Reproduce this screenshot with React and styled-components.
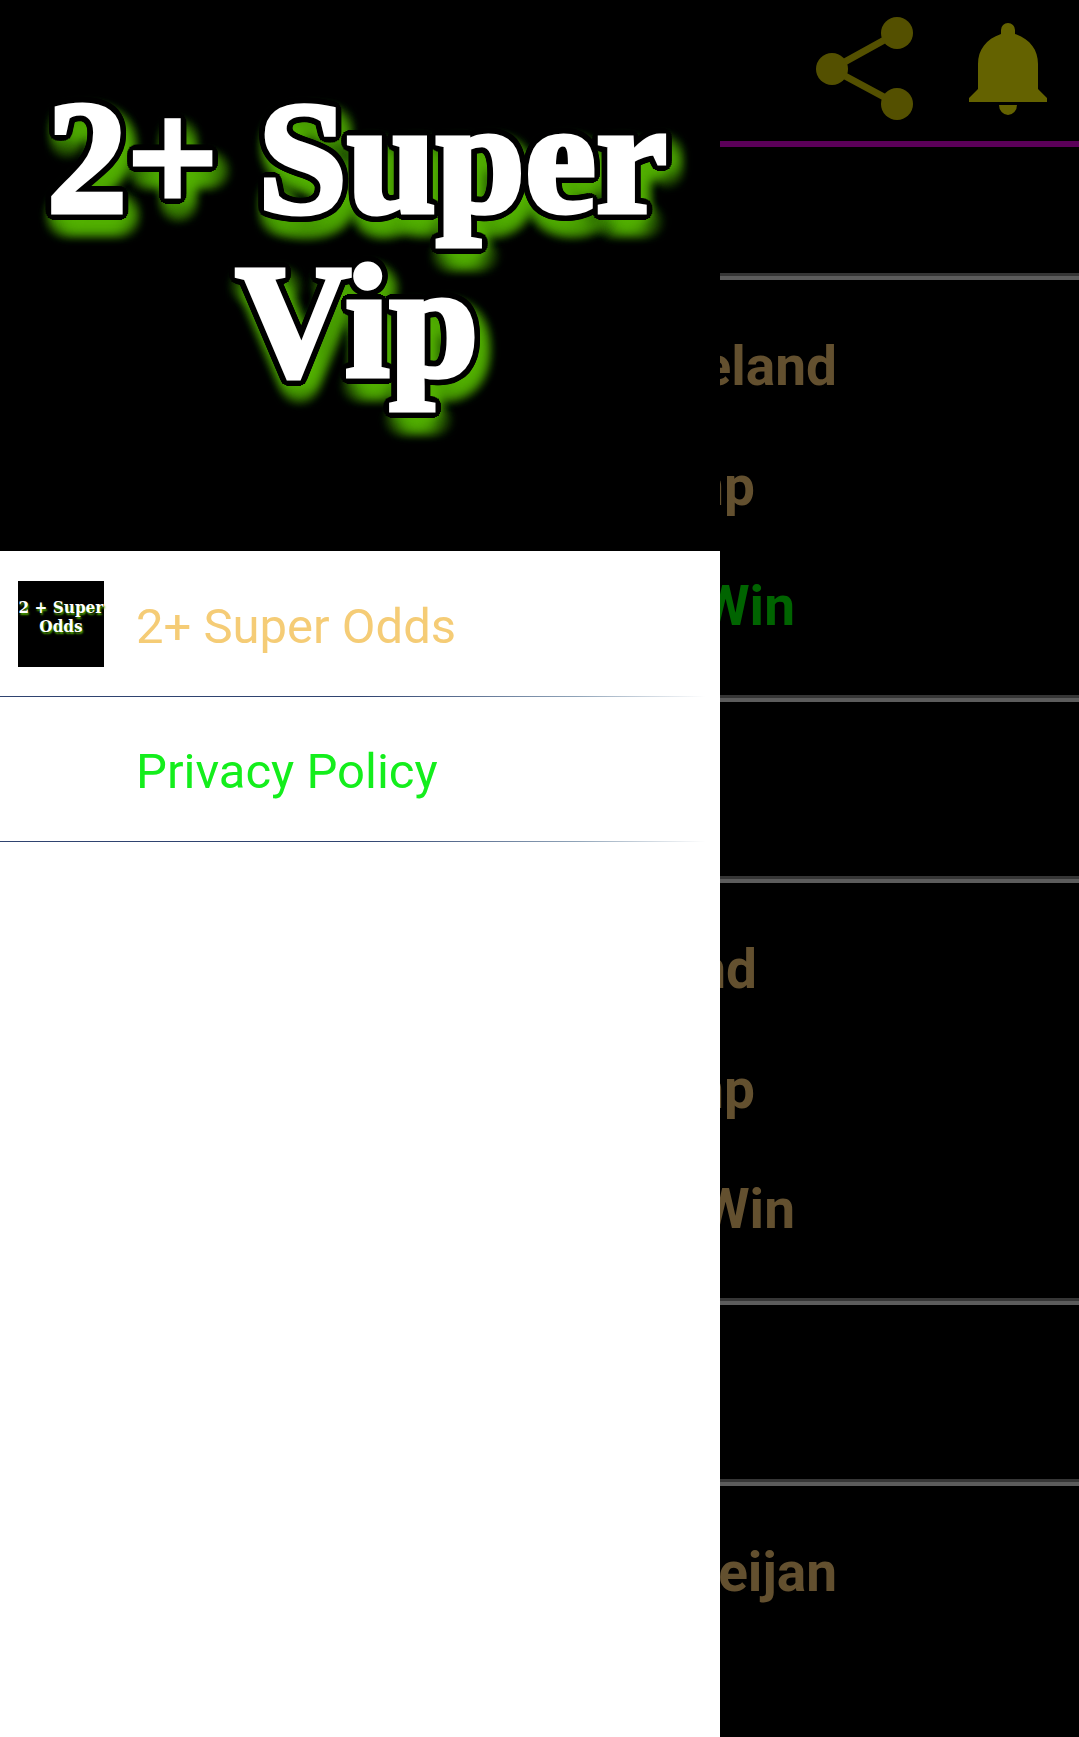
import React from "react";
import styled, { createGlobalStyle } from "styled-components";

const GlobalStyle = createGlobalStyle`
  *, *::before, *::after { box-sizing: border-box; }
  body {
    margin: 0;
    background: #000;
    font-family: Roboto, "Liberation Sans", sans-serif;
  }
`;

// Shadows set round a circle, so that they spread the lettering by `radius`.
const ring = (count, radius, dx, dy, blur, color) =>
  Array.from({ length: count }, (_, i) => {
    const angle = (i / count) * Math.PI * 2;
    const x = Math.round(dx + radius * Math.cos(angle));
    const y = Math.round(dy + radius * Math.sin(angle));
    return `${x}px ${y}px ${blur}px ${color}`;
  }).join(", ");

const outlineAndGlow = [
  ring(32, 8, 0, 0, 0, "#000"),
  ring(16, 11, 6, 12, 12, "rgba(84, 180, 0, 0.4)"),
].join(", ");

const Screen = styled.div`
  position: relative;
  height: 100vh;
  overflow: hidden;
  background: #000;
`;

const TopBar = styled.header`
  display: flex;
  justify-content: flex-end;
  gap: 50px;
  height: 147px;
  padding: 14px 26px 0 0;
  border-bottom: 6px solid #5b0059;
`;

const IconButton = styled.button`
  display: block;
  height: 110px;
  padding: 0;
  border: 0;
  background: none;
  color: ${(p) => p.$tone};
  svg { display: block; }
`;

const Spacer = styled.div`
  height: ${(p) => p.$height}px;
`;

const Rule = styled.hr`
  height: 7px;
  margin: 0;
  border: 0;
  background: linear-gradient(#363636 3px, #5c5c5c 3px);
`;

const Match = styled.section`
  height: 415px;
  padding-top: 26px;
`;

const Line = styled.p`
  margin: 0;
  padding-right: ${(p) => p.$end}px;
  text-align: right;
  font-size: 55px;
  font-weight: 700;
  line-height: 120px;
  color: ${(p) => (p.$won ? "#006400" : "#63502f")};
`;

const Drawer = styled.aside`
  position: absolute;
  inset: 0 auto 0 0;
  width: 66.73%;
  background: #fff;
`;

const Banner = styled.div`
  height: 552px;
  padding: 76px 6px 0 0;
  border-bottom: 1px solid #fff;
  background: #000;
`;

const Brand = styled.h1`
  margin: 0;
  font-family: "Liberation Serif", serif;
  font-size: 160px;
  font-weight: 700;
  line-height: 164px;
  text-align: center;
  color: #fff;
  -webkit-text-stroke: 5px #fff;
  text-shadow: ${outlineAndGlow};
`;

const MenuLink = styled.a`
  display: flex;
  align-items: center;
  gap: 32px;
  height: 145px;
  padding: 0 0 1px 18px;
  background: linear-gradient(90deg, #2f4370 50%, #8fa3b8 80%, #fff 98%) bottom / 100% 1px no-repeat;
  font-size: 49px;
  line-height: 58px;
  text-decoration: none;
  color: ${(p) => p.$tone};
`;

const MenuLabel = styled.span`
  padding-top: 5px;
`;

const Thumb = styled.span`
  width: 86px;
  height: 86px;
  padding-top: 17px;
  background: ${(p) => (p.$blank ? "transparent" : "#000")};
  font-family: "DejaVu Serif Condensed", "DejaVu Serif", serif;
  font-stretch: condensed;
  font-size: 17px;
  font-weight: 700;
  line-height: 19px;
  text-align: center;
  white-space: nowrap;
  color: #fff;
  text-shadow: 1px 2px 2px #4da600;
`;

const ShareIcon = () => (
  <svg width="98" height="110" viewBox="0 0 98 110" fill="currentColor" aria-hidden="true">
    <path d="M82 19 17 55l65 35" fill="none" stroke="currentColor" strokeWidth="7" />
    <circle cx="17" cy="55" r="16" />
    <circle cx="82" cy="19" r="16" />
    <circle cx="82" cy="90" r="16" />
  </svg>
);

const BellIcon = () => (
  <svg width="90" height="110" viewBox="0 0 90 110" fill="currentColor" aria-hidden="true">
    <path d="M45 9a7 7 0 0 0-7 7v4C23 25 15 36 15 50v25L6 84v4h78v-4l-9-9V50c0-14-8-25-23-30v-4a7 7 0 0 0-7-7Z" />
    <path d="M36 91h18a9 10 0 0 1-18 0Z" />
  </svg>
);

const matches = [
  { id: 1, lines: [["eland", 242], ["mp", 324], ["Win", 284]], won: true },
  { id: 2, lines: [["nd", 322], ["mp", 324], ["Win", 284]] },
  { id: 3, lines: [["eijan", 242]] },
];

export default function App() {
  return (
    <>
      <GlobalStyle />
      <Screen>
        <TopBar>
          <IconButton type="button" aria-label="Share" $tone="#545000">
            <ShareIcon />
          </IconButton>
          <IconButton type="button" aria-label="Notifications" $tone="#646200">
            <BellIcon />
          </IconButton>
        </TopBar>
        <main>
          {matches.map((match, i) => (
            <React.Fragment key={match.id}>
              <Spacer $height={i === 0 ? 126 : 174} />
              <Rule />
              <Match>
                {match.lines.map(([text, end]) => (
                  <Line key={text} $end={end} $won={match.won && text === "Win"}>
                    {text}
                  </Line>
                ))}
              </Match>
              <Rule />
            </React.Fragment>
          ))}
        </main>
        <Drawer>
          <Banner>
            <Brand>
              2+ Super
              <br />
              Vip
            </Brand>
          </Banner>
          <nav>
            <MenuLink href="#odds" $tone="#f5cc76">
              <Thumb>
                2 + Super
                <br />
                Odds
              </Thumb>
              <MenuLabel>2+ Super Odds</MenuLabel>
            </MenuLink>
            <MenuLink href="#privacy" $tone="#14ee1c">
              <Thumb $blank />
              <MenuLabel>Privacy Policy</MenuLabel>
            </MenuLink>
          </nav>
        </Drawer>
      </Screen>
    </>
  );
}
